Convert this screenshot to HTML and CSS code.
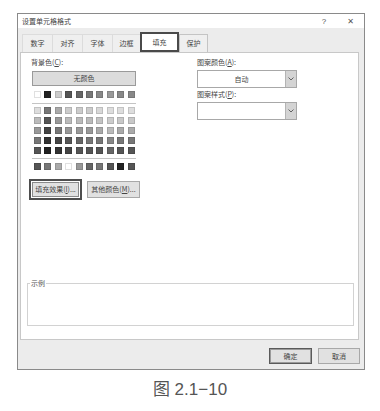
FILE: index.html
```html
<!DOCTYPE html>
<html lang="zh-CN">
<head>
  <meta charset="UTF-8">
  <title>设置单元格格式</title>
  <link rel="stylesheet" href="styles.css">
</head>
<body>

  <div class="dialog">
    <div class="titlebar">
      <span class="title">设置单元格格式</span>
      <span class="help">?</span>
      <span class="close">✕</span>
    </div>

    <div class="tabs">
      <div class="tab t1">数字</div>
      <div class="tab t2">对齐</div>
      <div class="tab t3">字体</div>
      <div class="tab t4">边框</div>
      <div class="tab active">填充</div>
      <div class="tab t6">保护</div>
    </div>

    <div class="panel">
      <div class="columns">
        <!-- left: background colour -->
        <div class="col-left">
          <div class="label">背景色(<u>C</u>):</div>
          <div class="no-color">无颜色</div>
          <div class="swatches">
            <i style="background:#fff"></i><i style="background:#222"></i><i style="background:#ccc"></i><i style="background:#555"></i><i style="background:#666"></i><i style="background:#777"></i><i style="background:#888"></i><i style="background:#999"></i><i style="background:#888"></i><i style="background:#888"></i>
          </div>
          <div class="sep"></div>
          <div class="swatches grid">
            <i style="background:#ddd"></i><i style="background:#777"></i><i style="background:#aaa"></i><i style="background:#ccc"></i><i style="background:#ccc"></i><i style="background:#ccc"></i><i style="background:#d8d8d8"></i><i style="background:#ddd"></i><i style="background:#ddd"></i><i style="background:#ddd"></i>
            <i style="background:#bbb"></i><i style="background:#555"></i><i style="background:#999"></i><i style="background:#bbb"></i><i style="background:#bbb"></i><i style="background:#bbb"></i><i style="background:#c4c4c4"></i><i style="background:#ccc"></i><i style="background:#c8c8c8"></i><i style="background:#c8c8c8"></i>
            <i style="background:#999"></i><i style="background:#444"></i><i style="background:#777"></i><i style="background:#999"></i><i style="background:#999"></i><i style="background:#999"></i><i style="background:#aaa"></i><i style="background:#bbb"></i><i style="background:#aaa"></i><i style="background:#aaa"></i>
            <i style="background:#777"></i><i style="background:#333"></i><i style="background:#444"></i><i style="background:#555"></i><i style="background:#666"></i><i style="background:#777"></i><i style="background:#777"></i><i style="background:#888"></i><i style="background:#777"></i><i style="background:#777"></i>
            <i style="background:#555"></i><i style="background:#222"></i><i style="background:#333"></i><i style="background:#444"></i><i style="background:#555"></i><i style="background:#555"></i><i style="background:#555"></i><i style="background:#666"></i><i style="background:#555"></i><i style="background:#555"></i>
          </div>
          <div class="sep sep2"></div>
          <div class="swatches">
            <i style="background:#555"></i><i style="background:#777"></i><i style="background:#aaa"></i><i style="background:#fff"></i><i style="background:#999"></i><i style="background:#666"></i><i style="background:#777"></i><i style="background:#555"></i><i style="background:#222"></i><i style="background:#555"></i>
          </div>
          <div class="btn-row">
            <div class="btn focused"><span>填充效果(<u>I</u>)...</span></div>
            <div class="btn">其他颜色(<u>M</u>)...</div>
          </div>
        </div>

        <!-- right: pattern -->
        <div class="col-right">
          <div class="label">图案颜色(<u>A</u>):</div>
          <div class="select">
            <span class="value">自动</span>
            <span class="arrow"><svg width="6" height="4" viewBox="0 0 6 4"><path d="M0.5 0.5 L3 3 L5.5 0.5" fill="none" stroke="#555" stroke-width="0.9"/></svg></span>
          </div>
          <div class="label label2">图案样式(<u>P</u>):</div>
          <div class="select">
            <span class="value"></span>
            <span class="arrow"><svg width="6" height="4" viewBox="0 0 6 4"><path d="M0.5 0.5 L3 3 L5.5 0.5" fill="none" stroke="#555" stroke-width="0.9"/></svg></span>
          </div>
        </div>
      </div>

      <fieldset class="sample">
        <legend>示例</legend>
      </fieldset>
    </div>

    <div class="footer">
      <div class="btn ok">确定</div>
      <div class="btn cancel">取消</div>
    </div>
  </div>

  <div class="caption">图 2.1−10</div>

</body>
</html>
```

FILE: styles.css
```css
body {
  margin: 0;
  background-color: #ffffff;
  font-family: "Noto Sans CJK SC", "Noto Sans", sans-serif;
  font-size: 7px;
  line-height: 9px;
  color: #444;
}

u {
  text-decoration: underline;
  text-underline-offset: 1px;
}

.dialog {
  width: 348px;
  height: 357px;
  margin: 13px 0 0 17px;
  box-sizing: border-box;
  border: 1px solid #8a8a8a;
  background-color: #ececec;
  display: flex;
  flex-direction: column;
}

/* title bar */
.titlebar {
  height: 14px;
  background-color: #fff;
  display: flex;
  align-items: center;
  padding: 0 0 0 4px;
  flex-shrink: 0;
}

.title {
  flex: 1;
  color: #444;
}

.help {
  font-family: "Liberation Sans", sans-serif;
  font-size: 8px;
  margin-right: 21px;
  color: #555;
}

.close {
  font-family: "DejaVu Sans", sans-serif;
  font-size: 8px;
  margin-right: 10px;
  color: #555;
}

/* tabs */
.tabs {
  height: 24px;
  display: flex;
  align-items: flex-end;
  padding-left: 4px;
  flex-shrink: 0;
}

.tab {
  height: 18px;
  box-sizing: border-box;
  border: 1px solid #dcdcdc;
  border-bottom: none;
  margin-right: -1px;
  display: flex;
  align-items: center;
  justify-content: center;
  color: #444;
  background-color: #efefef;
}

.t1 { width: 31px; }
.t2 { width: 31px; }
.t3 { width: 31px; }
.t4 { width: 29px; }
.t6 { width: 29px; border-color: #c4c4c4; }

.tab.active {
  width: 39px;
  height: 20px;
  border: 2px solid #4a4a4a;
  background-color: #fff;
  margin-right: 0;
  position: relative;
  z-index: 1;
}

/* panel */
.panel {
  height: 288px;
  box-sizing: border-box;
  margin: 0 5px 0 2px;
  border: 1px solid #c8c8c8;
  background-color: #fff;
  padding: 5px 2px 0 0;
  flex-shrink: 0;
}

.columns {
  display: grid;
  grid-template-columns: 176px 100px;
  height: 142px;
}

.col-left {
  padding-left: 8px;
}

.label {
  margin-left: 2px;
  color: #444;
}

.no-color {
  width: 104px;
  height: 15px;
  box-sizing: border-box;
  margin: 4px 0 0 3px;
  border: 1px solid #9a9a9a;
  background-color: #dcdcdc;
  display: flex;
  align-items: center;
  justify-content: center;
}

.swatches {
  display: grid;
  grid-template-columns: repeat(10, 7px);
  column-gap: 3.4px;
  row-gap: 3px;
  margin: 4.5px 0 0 5px;
}

.swatches i {
  display: block;
  width: 7px;
  height: 7px;
  box-sizing: border-box;
  border: 1px solid rgba(0, 0, 0, 0.12);
}

.grid {
  margin-top: 3px;
}

.sep {
  width: 104px;
  height: 1px;
  margin: 5px 0 0 3px;
  background-color: #c4c4c4;
}

.sep2 {
  margin-top: 4px;
}

.sep2 + .swatches {
  margin-top: 4px;
}

.btn-row {
  display: flex;
  align-items: center;
  gap: 5px;
  margin-top: 9.5px;
}

.btn {
  width: 53px;
  height: 17px;
  box-sizing: border-box;
  border: 1px solid #a8a8a8;
  background-color: #e1e1e1;
  display: flex;
  align-items: center;
  justify-content: center;
  white-space: nowrap;
}

.btn.focused {
  height: 21px;
  border: 2px solid #4e4e4e;
  padding: 1px;
  background-color: #fff;
}

.btn.focused span {
  flex: 1;
  height: 100%;
  background-color: #e1e1e1;
  border: 1px solid #8a8a8a;
  box-sizing: border-box;
  display: flex;
  align-items: center;
  justify-content: center;
}

.col-right .label {
  margin-left: 0;
}

.select {
  width: 100px;
  height: 18px;
  box-sizing: border-box;
  margin-top: 3px;
  border: 1px solid #a8a8a8;
  background-color: #fff;
  display: flex;
}

.select .value {
  flex: 1;
  display: flex;
  align-items: center;
  justify-content: center;
}

.select .arrow {
  width: 10px;
  background-color: #d4d4d4;
  border-left: 1px solid #b4b4b4;
  display: flex;
  align-items: center;
  justify-content: center;
}

.label2 {
  margin-top: 2px;
}

/* sample box */
.sample {
  margin: 79px 2px 0 6px;
  padding: 0;
  height: 45px;
  border: 1px solid #d2d2d2;
}

.sample legend {
  padding: 0 1px;
  margin-left: 2px;
  font-size: 7px;
  line-height: 9px;
  color: #555;
}

/* footer buttons */
.footer {
  flex: 1;
  display: flex;
  justify-content: flex-end;
  align-items: flex-start;
  gap: 6px;
  padding: 8px 4px 0 0;
}

.footer .btn {
  height: 16px;
  width: 42px;
}

.footer .ok {
  width: 43px;
  border: 1px solid #5a5a5a;
  box-shadow: inset 0 0 0 1px #9a9a9a;
}

.caption {
  margin-top: 10px;
  text-align: center;
  padding-right: 0;
  font-family: "Liberation Sans", "Noto Sans CJK SC", sans-serif;
  font-size: 17px;
  line-height: 20px;
  color: #555;
}
```
